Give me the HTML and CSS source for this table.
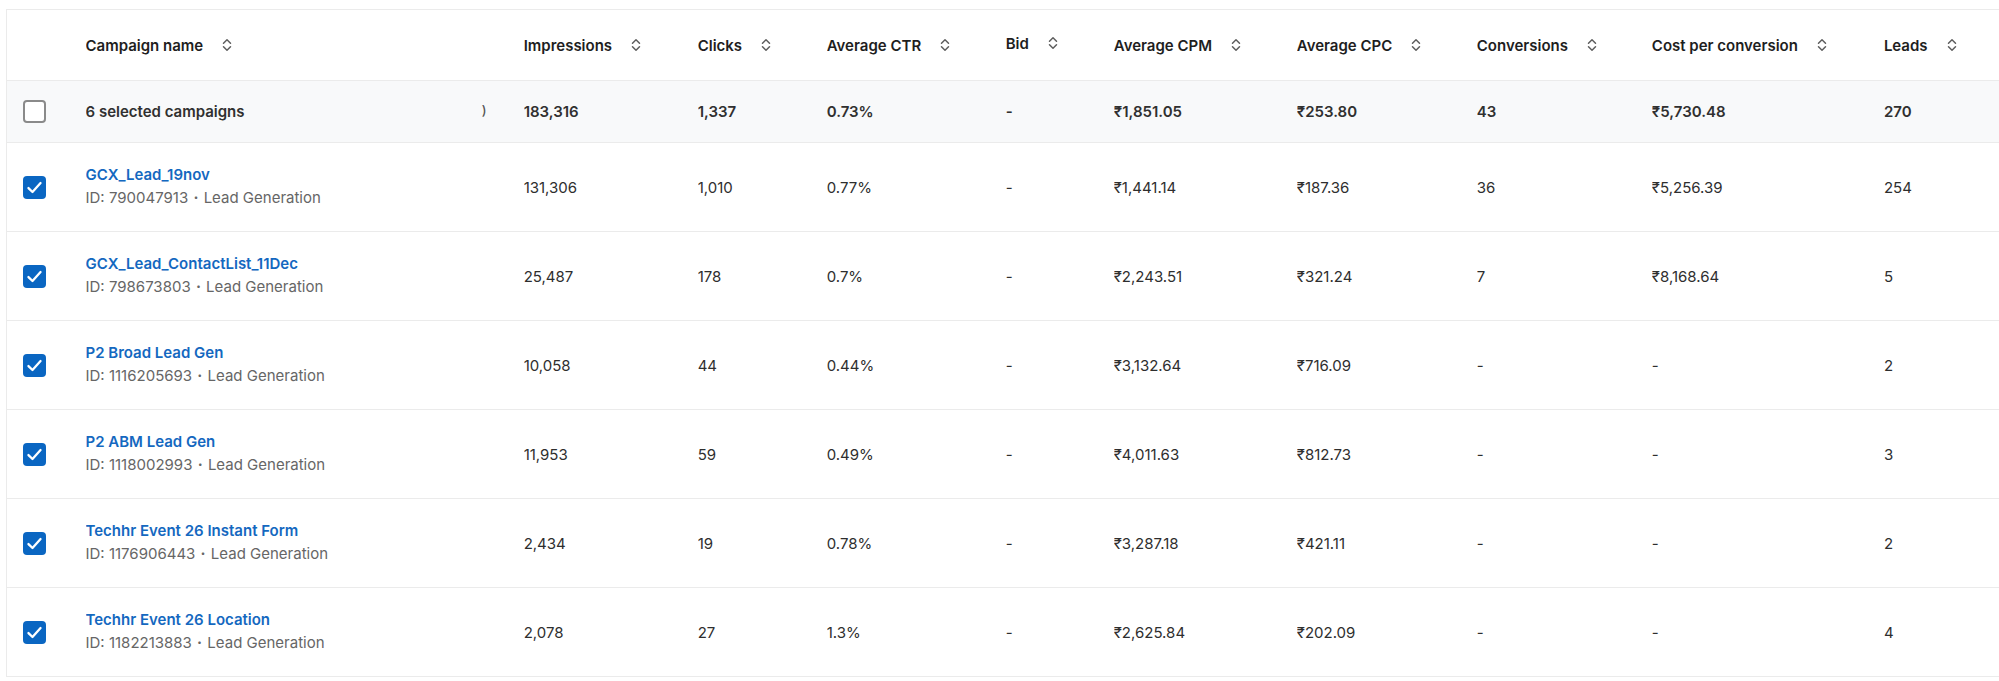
FILE: index.html
```html
<!DOCTYPE html>
<html lang="en">
<head>
<meta charset="utf-8">
<title>Campaigns</title>
<link rel="stylesheet" href="styles.css">
</head>
<body>
<div class="page">
  <table class="grid">
    <colgroup>
      <col class="c-check">
      <col class="c-name">
      <col class="c-impr">
      <col class="c-clicks">
      <col class="c-ctr">
      <col class="c-bid">
      <col class="c-cpm">
      <col class="c-cpc">
      <col class="c-conv">
      <col class="c-cost">
      <col class="c-leads">
    </colgroup>
    <thead>
      <tr class="head">
        <th></th>
        <th><span class="th">Campaign name<svg class="sort" viewBox="0 0 12 14"><path d="M2.5 5.2 6 1.8 9.5 5.2M2.5 8.8 6 12.2 9.5 8.8"/></svg></span></th>
        <th><span class="th">Impressions<svg class="sort" viewBox="0 0 12 14"><path d="M2.5 5.2 6 1.8 9.5 5.2M2.5 8.8 6 12.2 9.5 8.8"/></svg></span></th>
        <th><span class="th">Clicks<svg class="sort" viewBox="0 0 12 14"><path d="M2.5 5.2 6 1.8 9.5 5.2M2.5 8.8 6 12.2 9.5 8.8"/></svg></span></th>
        <th><span class="th">Average CTR<svg class="sort" viewBox="0 0 12 14"><path d="M2.5 5.2 6 1.8 9.5 5.2M2.5 8.8 6 12.2 9.5 8.8"/></svg></span></th>
        <th><span class="th bid">Bid<svg class="sort" viewBox="0 0 12 14"><path d="M2.5 5.2 6 1.8 9.5 5.2M2.5 8.8 6 12.2 9.5 8.8"/></svg></span></th>
        <th><span class="th">Average CPM<svg class="sort" viewBox="0 0 12 14"><path d="M2.5 5.2 6 1.8 9.5 5.2M2.5 8.8 6 12.2 9.5 8.8"/></svg></span></th>
        <th><span class="th">Average CPC<svg class="sort" viewBox="0 0 12 14"><path d="M2.5 5.2 6 1.8 9.5 5.2M2.5 8.8 6 12.2 9.5 8.8"/></svg></span></th>
        <th><span class="th">Conversions<svg class="sort" viewBox="0 0 12 14"><path d="M2.5 5.2 6 1.8 9.5 5.2M2.5 8.8 6 12.2 9.5 8.8"/></svg></span></th>
        <th><span class="th">Cost per conversion<svg class="sort" viewBox="0 0 12 14"><path d="M2.5 5.2 6 1.8 9.5 5.2M2.5 8.8 6 12.2 9.5 8.8"/></svg></span></th>
        <th><span class="th">Leads<svg class="sort" viewBox="0 0 12 14"><path d="M2.5 5.2 6 1.8 9.5 5.2M2.5 8.8 6 12.2 9.5 8.8"/></svg></span></th>
      </tr>
    </thead>
    <tbody>
      <tr class="summary">
        <td><span class="box"></span></td>
        <td><div class="sum-name"><span>6 selected campaigns</span><span class="stray">)</span></div></td>
        <td>183,316</td>
        <td>1,337</td>
        <td>0.73%</td>
        <td>-</td>
        <td>₹1,851.05</td>
        <td>₹253.80</td>
        <td>43</td>
        <td>₹5,730.48</td>
        <td>270</td>
      </tr>
      <tr class="row">
        <td><span class="box on"><svg viewBox="0 0 16 16"><path d="M3.8 8.4 6.6 11.1 12.2 4.9"/></svg></span></td>
        <td><a class="name">GCX_Lead_19nov</a><div class="sub">ID: 790047913 <span class="dot">·</span> Lead Generation</div></td>
        <td>131,306</td><td>1,010</td><td>0.77%</td><td>-</td><td>₹1,441.14</td><td>₹187.36</td><td>36</td><td>₹5,256.39</td><td>254</td>
      </tr>
      <tr class="row">
        <td><span class="box on"><svg viewBox="0 0 16 16"><path d="M3.8 8.4 6.6 11.1 12.2 4.9"/></svg></span></td>
        <td><a class="name">GCX_Lead_ContactList_11Dec</a><div class="sub">ID: 798673803 <span class="dot">·</span> Lead Generation</div></td>
        <td>25,487</td><td>178</td><td>0.7%</td><td>-</td><td>₹2,243.51</td><td>₹321.24</td><td>7</td><td>₹8,168.64</td><td>5</td>
      </tr>
      <tr class="row">
        <td><span class="box on"><svg viewBox="0 0 16 16"><path d="M3.8 8.4 6.6 11.1 12.2 4.9"/></svg></span></td>
        <td><a class="name">P2 Broad Lead Gen</a><div class="sub">ID: 1116205693 <span class="dot">·</span> Lead Generation</div></td>
        <td>10,058</td><td>44</td><td>0.44%</td><td>-</td><td>₹3,132.64</td><td>₹716.09</td><td>-</td><td>-</td><td>2</td>
      </tr>
      <tr class="row">
        <td><span class="box on"><svg viewBox="0 0 16 16"><path d="M3.8 8.4 6.6 11.1 12.2 4.9"/></svg></span></td>
        <td><a class="name">P2 ABM Lead Gen</a><div class="sub">ID: 1118002993 <span class="dot">·</span> Lead Generation</div></td>
        <td>11,953</td><td>59</td><td>0.49%</td><td>-</td><td>₹4,011.63</td><td>₹812.73</td><td>-</td><td>-</td><td>3</td>
      </tr>
      <tr class="row">
        <td><span class="box on"><svg viewBox="0 0 16 16"><path d="M3.8 8.4 6.6 11.1 12.2 4.9"/></svg></span></td>
        <td><a class="name">Techhr Event 26 Instant Form</a><div class="sub">ID: 1176906443 <span class="dot">·</span> Lead Generation</div></td>
        <td>2,434</td><td>19</td><td>0.78%</td><td>-</td><td>₹3,287.18</td><td>₹421.11</td><td>-</td><td>-</td><td>2</td>
      </tr>
      <tr class="row">
        <td><span class="box on"><svg viewBox="0 0 16 16"><path d="M3.8 8.4 6.6 11.1 12.2 4.9"/></svg></span></td>
        <td><a class="name">Techhr Event 26 Location</a><div class="sub">ID: 1182213883 <span class="dot">·</span> Lead Generation</div></td>
        <td>2,078</td><td>27</td><td>1.3%</td><td>-</td><td>₹2,625.84</td><td>₹202.09</td><td>-</td><td>-</td><td>4</td>
      </tr>
    </tbody>
  </table>
</div>
</body>
</html>
```

FILE: styles.css
```css
html, body {
  margin: 0;
  padding: 0;
  background: #ffffff;
  overflow: hidden;
}

body {
  font-family: Inter, "Noto Sans", "Liberation Sans", sans-serif;
  color: #2b2b2b;
  font-size: 15px;
}

.page {
  padding: 9px 0 0 6px;
  width: 1993px;
}

.grid {
  border-collapse: collapse;
  table-layout: fixed;
  width: 1993px;
  border-top: 1px solid #ebebeb;
  border-left: 1px solid #ebebeb;
}

.c-check { width: 79px; }
.c-name { width: 438px; }
.c-impr { width: 174px; }
.c-clicks { width: 129px; }
.c-ctr { width: 179px; }
.c-bid { width: 108px; }
.c-cpm { width: 183px; }
.c-cpc { width: 180px; }
.c-conv { width: 175px; }
.c-cost { width: 232px; }
.c-leads { width: 115px; }

th, td {
  padding: 0;
  text-align: left;
  vertical-align: middle;
  white-space: nowrap;
  overflow: hidden;
}

.head th {
  height: 70px;
  border-bottom: 1px solid #ebebeb;
  font-weight: 600;
  color: #1e1e1e;
  font-size: 15px;
}

.th {
  display: inline-flex;
  align-items: center;
  gap: 18px;
}

.bid {
  position: relative;
  top: -2px;
}

.sort {
  width: 12px;
  height: 14px;
  fill: none;
  stroke: #5e5e5e;
  stroke-width: 1.5;
  stroke-linecap: round;
  stroke-linejoin: round;
}

.summary td {
  height: 61px;
  background: #f8f9fa;
  border-bottom: 1px solid #ebebeb;
  font-weight: 600;
  color: #303030;
  font-size: 15px;
}

.sum-name {
  display: flex;
  justify-content: space-between;
  padding-right: 37px;
}

.stray {
  color: #555;
  font-weight: 500;
  font-size: 13px;
}

.row td {
  height: 88px;
  border-bottom: 1px solid #ebebeb;
  color: #2e2e2e;
  font-size: 15px;
}

.box {
  display: block;
  box-sizing: border-box;
  width: 23px;
  height: 23px;
  margin-left: 16px;
  border: 2px solid #8a8a8a;
  border-radius: 4px;
  background: #ffffff;
}

.box.on {
  border: none;
  background: #0a66c2;
}

.box svg {
  display: block;
  width: 23px;
  height: 23px;
  fill: none;
  stroke: #ffffff;
  stroke-width: 1.6;
  stroke-linecap: round;
  stroke-linejoin: round;
}

.name {
  display: block;
  color: #1468c0;
  font-weight: 600;
  font-size: 15px;
  line-height: 22px;
}

.sub {
  color: #666666;
  font-size: 15px;
  line-height: 24px;
}

.dot {
  font-weight: 700;
  padding: 0 1px;
}
```
